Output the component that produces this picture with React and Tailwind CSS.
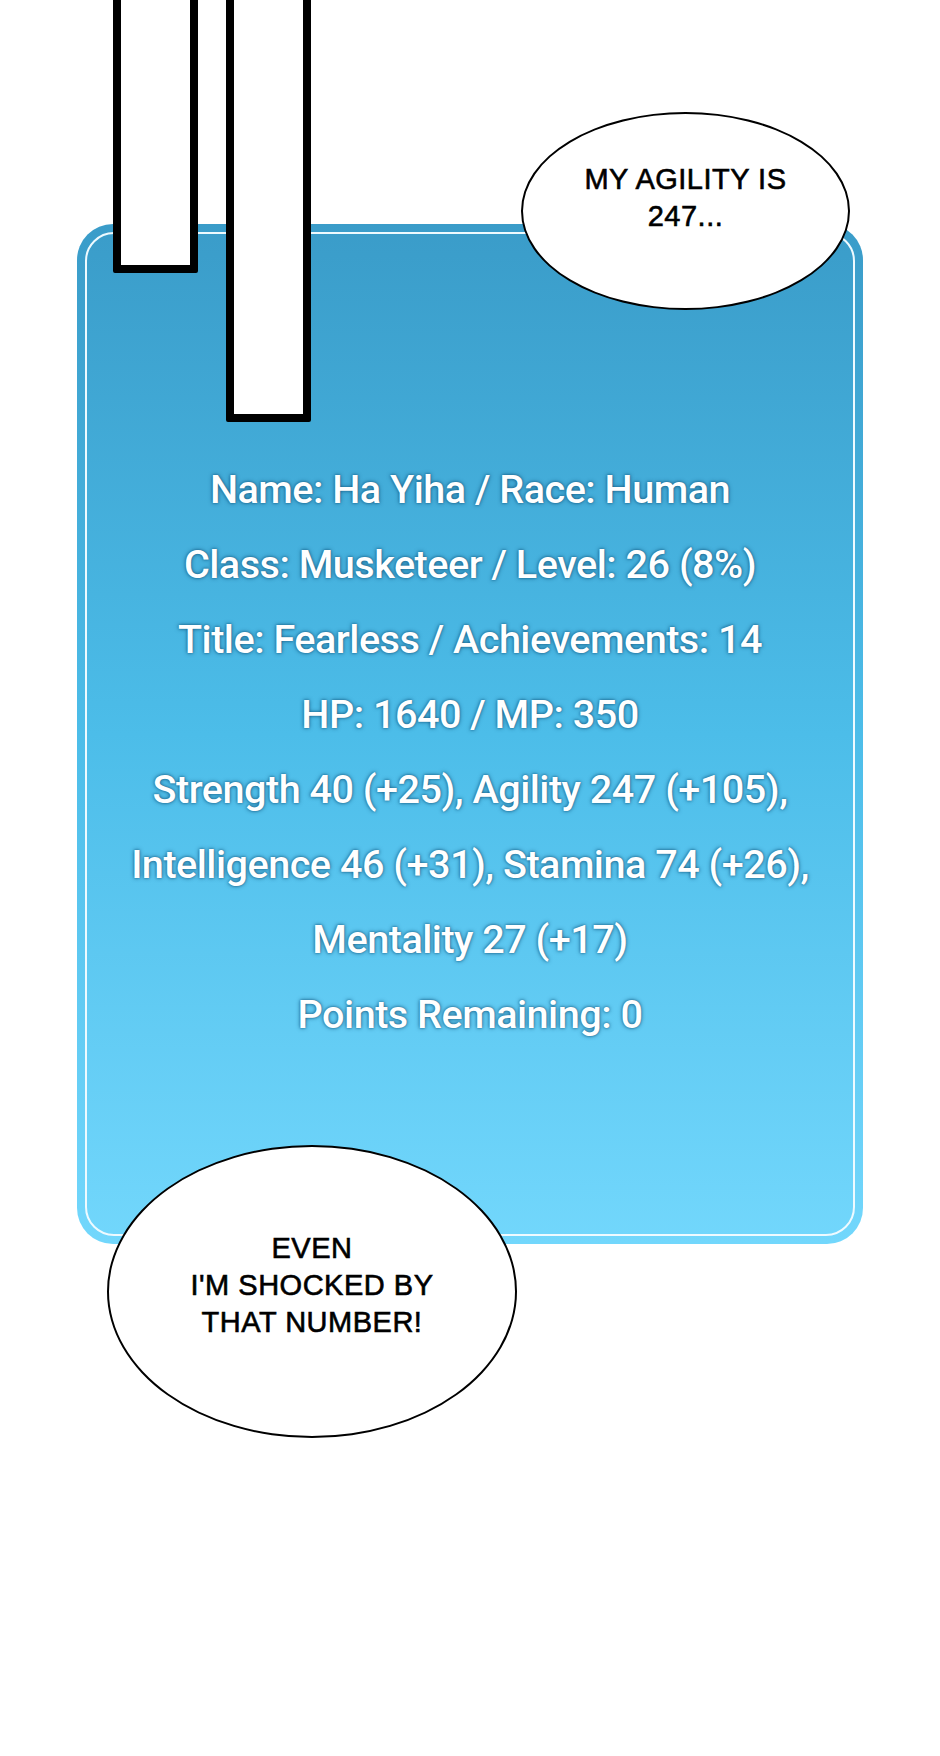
const stats = [
  'Name: Ha Yiha / Race: Human',
  'Class: Musketeer / Level: 26 (8%)',
  'Title: Fearless / Achievements: 14',
  'HP: 1640 / MP: 350',
  'Strength 40 (+25), Agility 247 (+105),',
  'Intelligence 46 (+31), Stamina 74 (+26),',
  'Mentality 27 (+17)',
  'Points Remaining: 0',
];

const Bubble = ({ className, children }) => (
  <div
    className={`absolute rounded-[50%] border-[2.5px] border-black bg-white flex flex-col items-center justify-center text-center text-black uppercase font-['Liberation_Sans',Arial,sans-serif] text-[29px] leading-[37px] tracking-[0.5px] [-webkit-text-stroke:0.6px_black] ${className}`}
  >
    {children}
  </div>
);

export default function App() {
  return (
    <div className="relative w-[940px] h-[1756px] bg-white overflow-hidden">
      {/* status window */}
      <div className="absolute left-[77px] top-[224px] w-[786px] h-[1020px] rounded-[36px] bg-gradient-to-b from-[#3a9cc9] via-[#4cbde9] to-[#72d7fc] p-[8px]">
        <div className="h-full rounded-[29px] border-[2.5px] border-[#eefaff] pt-[218px] flex flex-col items-center">
          {stats.map((line) => (
            <p
              key={line}
              className="text-white text-[39.6px] leading-[75px] font-medium tracking-[-0.5px] font-['Roboto','Noto_Sans',sans-serif] [text-shadow:0_0_4px_rgba(16,82,122,0.85),0_0_2px_rgba(16,82,122,0.6)]"
            >
              {line}
            </p>
          ))}
        </div>
      </div>

      {/* hanging panels */}
      <div className="absolute left-[113px] top-[-10px] w-[85px] h-[283px] bg-white border-[8px] border-black rounded-[2px]" />
      <div className="absolute left-[226px] top-[-10px] w-[85px] h-[432px] bg-white border-[8px] border-black rounded-[2px]" />

      {/* speech bubbles */}
      <Bubble className="left-[521px] top-[112px] w-[329px] h-[198px] pb-[26px]">
        <span>My agility is</span>
        <span>247...</span>
      </Bubble>
      <Bubble className="left-[107px] top-[1145px] w-[410px] h-[293px] pb-[12px]">
        <span>Even</span>
        <span>I'm shocked by</span>
        <span>that number!</span>
      </Bubble>
    </div>
  );
}
